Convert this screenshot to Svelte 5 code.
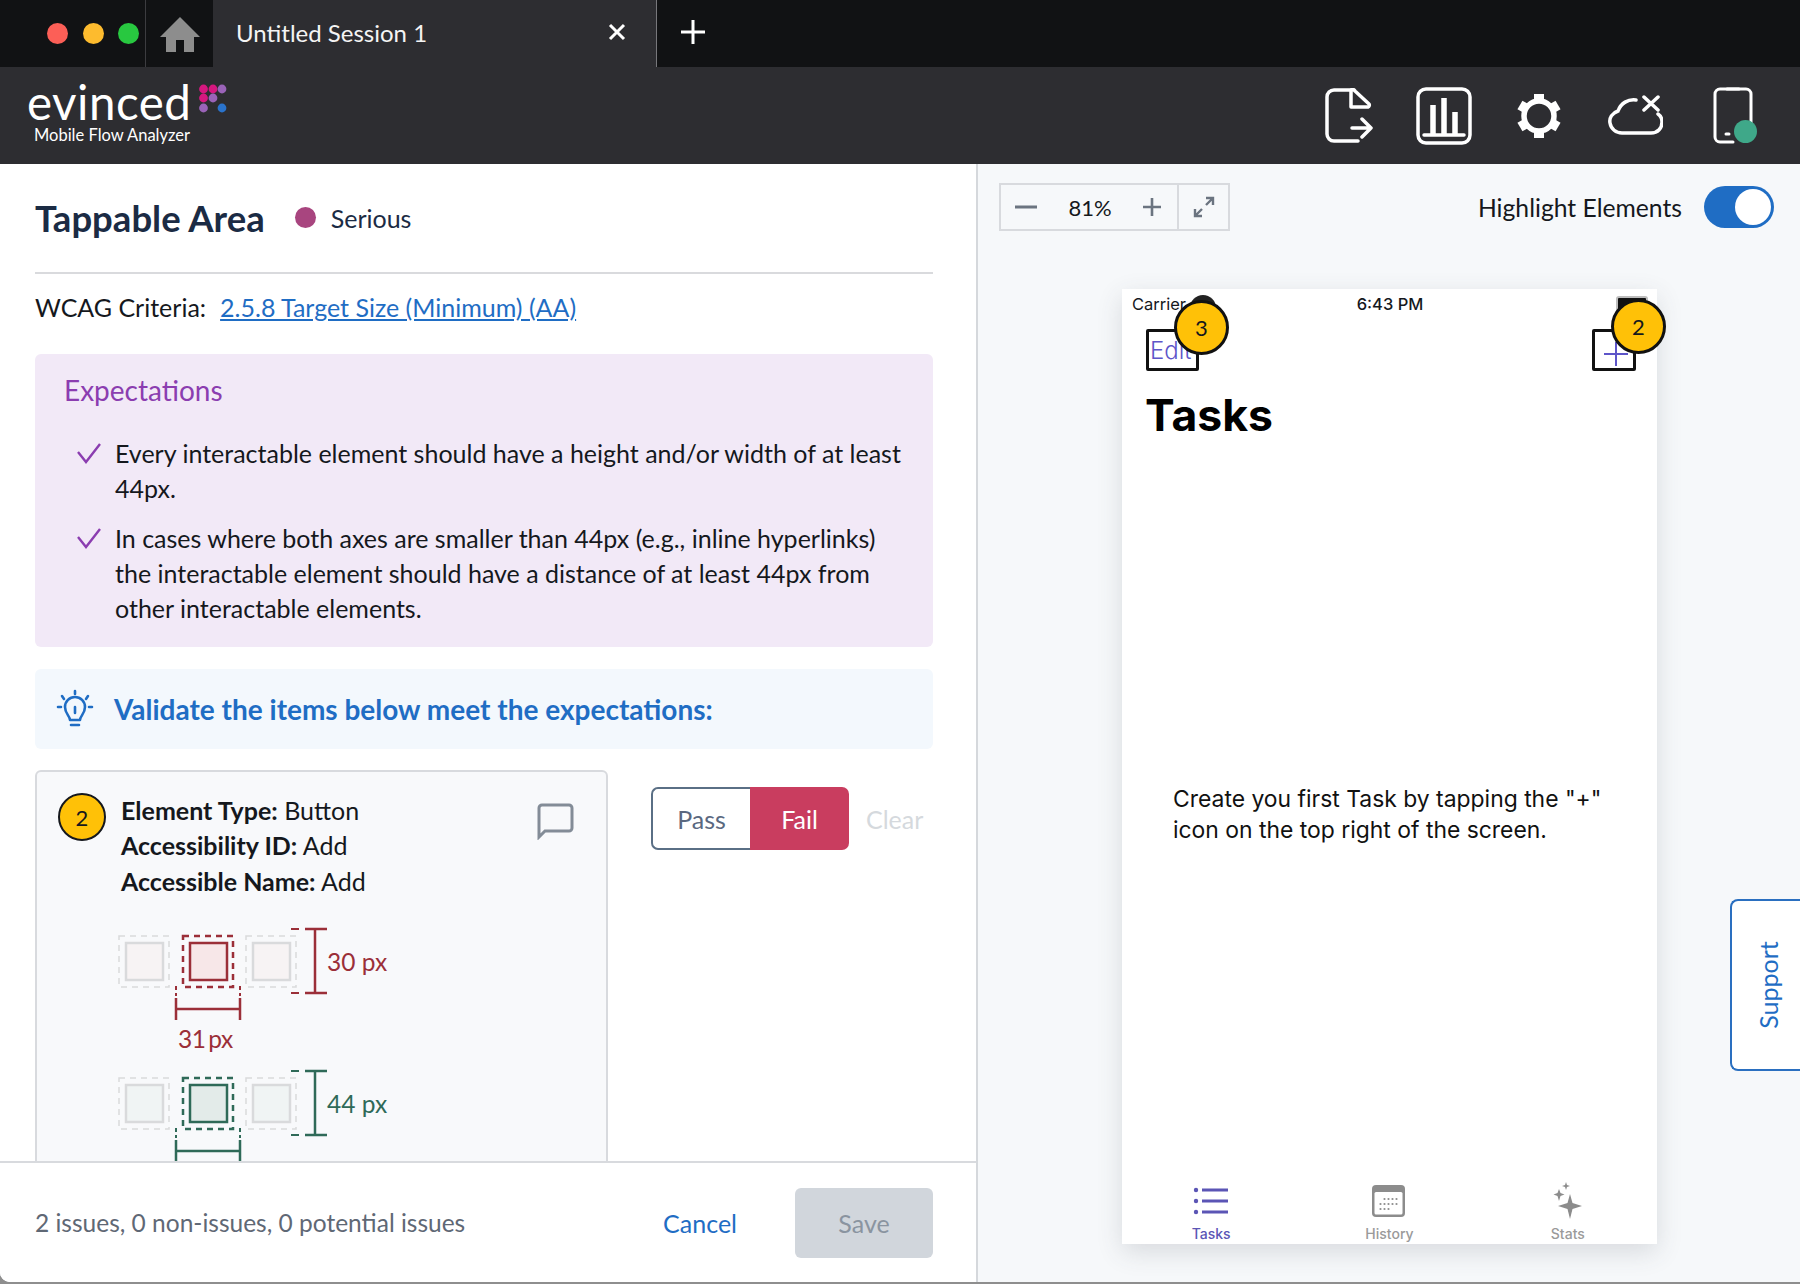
<script>
	const logoDots = [
		[204.5, 91, "#d6177f"], [214, 91, "#d6177f"], [223, 91, "#9a63b8"],
		[204.5, 100, "#d6177f"], [214, 100, "#9a63b8"],
		[204.5, 110, "#9a63b8"], [223, 110, "#2a73cc"]
	];
	const expectations = [
		"Every interactable element should have a height and/or width of at least 44px.",
		"In cases where both axes are smaller than 44px (e.g., inline hyperlinks) the interactable element should have a distance of at least 44px from other interactable elements."
	];
	const details = [
		["Element Type:", "Button"],
		["Accessibility ID:", "Add"],
		["Accessible Name:", "Add"]
	];
	const squares = [119, 183, 246];
	const gearTeeth = [0, 60, 120, 180, 240, 300];
	const calDots = [
		[12, 13], [16, 13], [20, 13], [24, 13],
		[8, 18], [12, 18], [16, 18], [20, 18], [24, 18],
		[8, 23], [12, 23], [16, 23]
	];
</script>

{#snippet measure(y, color, label, active)}
	{#each squares as x, i}
		<rect x={x} y={y} width="50" height="51" fill="none"
			stroke={i === 1 ? color : "#d9dadc"} stroke-width={i === 1 ? 2.5 : 1.5} stroke-dasharray="6 5" />
		<rect x={x + 7} y={y + 7} width="37" height="37" fill={active}
			fill-opacity={i === 1 ? 1 : 0.35}
			stroke={i === 1 ? color : "#d9dadc"} stroke-width="2.500" />
	{/each}
	<path d="M291 {y - 7}h8M291 {y + 57}h8" stroke={color} stroke-width="2" />
	<path d="M305 {y - 7}h22M305 {y + 57}h22M315 {y - 7}v64" stroke={color} stroke-width="2.500" fill="none" />
	<text x="327" y={y + 35} fill={color} class="px">{label}</text>
	<path d="M176 {y + 50}v10M240 {y + 50}v10" stroke={color} stroke-width="2" stroke-dasharray="4 3" />
	<path d="M176 {y + 62}v22M240 {y + 62}v22M176 {y + 73}h64" stroke={color} stroke-width="2.500" fill="none" />
{/snippet}

<div class="app">
	<div class="titlebar">
		<div class="lights">
			<span class="light red"></span>
			<span class="light yellow"></span>
			<span class="light green"></span>
		</div>
		<div class="home">
			<svg width="40" height="36" viewBox="0 0 40 36"><path d="M20 1L0 21h6v15h10V24h8v12h10V21h6z" fill="#8d8d8d" /></svg>
		</div>
		<div class="tab">
			<span>Untitled Session 1</span>
			<svg width="18" height="18" viewBox="0 0 18 18"><path d="M2 2l14 14M16 2L2 16" stroke="#fff" stroke-width="3" /></svg>
		</div>
		<div class="newtab">
			<svg width="26" height="26" viewBox="0 0 26 26"><path d="M13 1v24M1 13h24" stroke="#fff" stroke-width="3" /></svg>
		</div>
	</div>

	<header class="header">
		<div class="logo">
			<div class="logo-name">evinced</div>
			<div class="logo-sub">Mobile Flow Analyzer</div>
			<svg class="logo-dots" width="40" height="40" viewBox="200 86 30 30">
				{#each logoDots as [cx, cy, fill]}
					<circle {cx} {cy} r="4.4" {fill} />
				{/each}
			</svg>
		</div>
		<div class="tools">
			<svg class="file" width="48" height="56" viewBox="0 0 48 56" fill="none" stroke="#fff" stroke-width="3.5" stroke-linecap="round" stroke-linejoin="round">
				<path d="M33 53H9a7 7 0 0 1-7-7V9a7 7 0 0 1 7-7h17" />
				<path d="M26 2v17h17a2 2 0 0 0 1-3L30 3a3 3 0 0 0-4-1z" />
				<path d="M27 40h19M37 31l9 9-9 9" />
			</svg>
			<svg class="chart" width="56" height="58" viewBox="0 0 56 58" fill="none" stroke="#fff">
				<rect x="2" y="2" width="52" height="54" rx="8" stroke-width="3.5" />
				<path d="M8 48h40" stroke-width="3.5" stroke-linecap="round" />
				<path d="M17 18v30M28 11v37M39 25v23" stroke-width="5.5" />
			</svg>
			<svg class="gear" width="44" height="44" viewBox="0 0 44 44">
				<circle cx="22" cy="22" r="15" fill="none" stroke="#fff" stroke-width="5.500" />
				{#each gearTeeth as angle}
					<rect x="17" y="0" width="10" height="6" fill="#fff" transform="rotate({angle} 22 22)" />
				{/each}
			</svg>
			<svg class="cloud" width="56" height="41" viewBox="0 0 56 41" fill="none" stroke="#fff" stroke-width="3.5" stroke-linecap="round">
				<path d="M29 5c-8-1-15 3-18 11C5 18 2 23 3 28c1 6 6 10 12 10h29c7 0 11-5 11-11 0-3-1-6-4-8" />
				<path d="M37 2l14 13M51 2L37 15" />
			</svg>
			<div class="device">
				<svg width="40" height="57" viewBox="0 0 40 57" fill="none" stroke="#fff" stroke-width="3" stroke-linecap="round">
					<path d="M20 55H7a5 5 0 0 1-5-5V7a5 5 0 0 1 5-5h26a5 5 0 0 1 5 5v30" />
					<path d="M14 2h12M13 47h3" />
				</svg>
				<span class="status-dot"></span>
			</div>
		</div>
	</header>

	<main class="main">
		<section class="review">
			<div class="review-body">
				<div class="heading">
					<h1>Tappable Area</h1>
					<span class="severity-dot"></span>
					<span class="severity">Serious</span>
				</div>
				<div class="criteria">
					<span>WCAG Criteria:</span>
					<a href="#wcag">2.5.8 Target Size (Minimum) (AA)</a>
				</div>

				<div class="expect">
					<h2>Expectations</h2>
					{#each expectations as line}
						<div class="expect-item">
							<svg width="26" height="22" viewBox="0 0 26 22" fill="none"><path d="M2 10l8 10L24 2" stroke="#8b3db0" stroke-width="2.400" /></svg>
							<p>{line}</p>
						</div>
					{/each}
				</div>

				<div class="validate">
					<svg width="38" height="40" viewBox="0 0 38 40" fill="none" stroke="#1f6dc4" stroke-width="2.6" stroke-linecap="round" stroke-linejoin="round">
						<path d="M19 2v3M6 7l2 3M32 7l-2 3M2 18h3M33 18h3" />
						<path d="M14 31c0-4-5-6-5-13a10 10 0 0 1 20 0c0 7-5 9-5 13z" />
						<path d="M19 18v6M15 36h8" />
					</svg>
					<span>Validate the items below meet the expectations:</span>
				</div>

				<div class="item-row">
					<div class="card">
						<div class="card-top">
							<span class="badge small">2</span>
							<div class="details">
								{#each details as [key, value]}
									<div><span class="key">{key}</span> {value}</div>
								{/each}
							</div>
							<svg class="comment" width="37" height="38" viewBox="0 0 37 38" fill="none">
								<path d="M2 35V6a3 3 0 0 1 3-3h27a3 3 0 0 1 3 3v20a3 3 0 0 1-3 3H8z" stroke="#838c97" stroke-width="3" />
							</svg>
						</div>
						<svg class="diagram" width="300" height="250" viewBox="110 920 300 250">
							{@render measure(935, "#9b2f38", "30 px", "#f7e7e8")}
							<text x="178" y="1047" fill="#9b2f38" class="px narrow">31 px</text>
							{@render measure(1077, "#2f6a58", "44 px", "#e3ebe9")}
						</svg>
					</div>
					<div class="verdict">
						<div class="seg">
							<button class="pass">Pass</button>
							<button class="fail">Fail</button>
						</div>
						<span class="clear">Clear</span>
					</div>
				</div>
			</div>

			<footer class="footer">
				<span class="counts">2 issues, 0 non-issues, 0 potential issues</span>
				<a class="cancel" href="#cancel">Cancel</a>
				<button class="save">Save</button>
			</footer>
		</section>

		<section class="preview">
			<div class="toolbar">
				<div class="zoom">
					<div class="zoom-main">
						<svg width="24" height="4" viewBox="0 0 24 4"><path d="M1 2h22" stroke="#6b7480" stroke-width="3" /></svg>
						<span>81%</span>
						<svg width="20" height="20" viewBox="0 0 20 20"><path d="M10 1v18M1 10h18" stroke="#6b7480" stroke-width="2.6" /></svg>
					</div>
					<div class="zoom-fit">
						<svg width="24" height="24" viewBox="0 0 24 24" fill="none" stroke="#6b7480" stroke-width="2.4"><path d="M3 21l7-7M14 10l7-7M3 14v7h7M14 3h7v7" /></svg>
					</div>
				</div>
				<div class="highlight">
					<span>Highlight Elements</span>
					<div class="toggle"><span class="knob"></span></div>
				</div>
			</div>

			<div class="phone">
				<div class="statusbar">
					<span class="carrier">Carrier</span>
					<span class="time">6:43 PM</span>
					<span class="battery"></span>
				</div>
				<div class="navbar">
					<div class="target edit"><span>Edit</span></div>
					<div class="target add">
						<svg width="26" height="26" viewBox="0 0 26 26"><path d="M13 1v24M1 13h24" stroke="#5d55c9" stroke-width="2" /></svg>
					</div>
				</div>
				<h3 class="tasks-title">Tasks</h3>
				<p class="empty">Create you first Task by tapping the "+" icon on the top right of the screen.</p>
				<nav class="tabbar">
					<div class="tabitem active">
						<svg width="36" height="40" viewBox="0 0 36 40">
							<g fill="#5b55b5"><circle cx="3" cy="9" r="2.2" /><circle cx="3" cy="20" r="2.2" /><circle cx="3" cy="31" r="2.2" /></g>
							<path d="M9 9h26M9 20h26M9 31h26" stroke="#5b55b5" stroke-width="3" />
						</svg>
						<span>Tasks</span>
					</div>
					<div class="tabitem">
						<svg width="34" height="40" viewBox="0 0 34 34">
							<rect x="0" y="1" width="33" height="32" rx="4" fill="#8c8c8c" />
							<rect x="2.5" y="8" width="28" height="22.5" rx="1.5" fill="#fff" />
							{#each calDots as [cx, cy]}
								<circle cx={cx + 0.5} cy={cy + 2} r="1.1" fill="#8c8c8c" />
							{/each}
						</svg>
						<span>History</span>
					</div>
					<div class="tabitem">
						<svg width="34" height="40" viewBox="0 0 34 40" fill="#8c8c8c">
							<path d="M19 13l2.5 9 9.5 3-9.500 3L19 38l-2.500-10L7 25l9.500-3z" />
							<path d="M8 8l1.500 4 4 1.500-4 1.500L8 20l-1.500-5-4-1.500 4-1.500z" />
							<path d="M15 1l1 3 3 1-3 1-1 3-1-3-3-1 3-1z" />
						</svg>
						<span>Stats</span>
					</div>
				</nav>
				<span class="wifi"></span>
				<span class="badge large edit-badge">3</span>
				<span class="badge large add-badge">2</span>
			</div>

			<div class="support"><span>Support</span></div>
		</section>
	</main>
</div>

<style>
	:global(body) {
		margin: 0;
		background: #8e8e8e;
	}
	.app {
		width: 1800px;
		height: 1284px;
		display: flex;
		flex-direction: column;
		overflow: hidden;
		font-family: "Lato", "Liberation Sans", sans-serif;
		font-size: 25px;
		color: #15181d;
	}
	.titlebar {
		height: 67px;
		flex: none;
		display: flex;
		background: #111214;
	}
	.lights {
		width: 146px;
		display: flex;
		align-items: center;
		gap: 14.5px;
		padding-left: 47px;
		box-sizing: border-box;
		border-right: 1px solid #3c3c40;
	}
	.light {
		width: 21px;
		height: 21px;
		border-radius: 50%;
	}
	.red { background: #fc5f57; }
	.yellow { background: #fdbb2e; }
	.green { background: #28c840; }
	.home {
		width: 67px;
		display: flex;
		align-items: center;
		justify-content: center;
	}
	.tab {
		width: 444px;
		box-sizing: border-box;
		padding: 0 30px 3px 23px;
		display: flex;
		align-items: center;
		justify-content: space-between;
		background: #2d2d31;
		color: #f4f4f4;
		font-size: 24px;
		border-right: 1px solid #77777b;
	}
	.newtab {
		width: 72px;
		padding-bottom: 3px;
		display: flex;
		align-items: center;
		justify-content: center;
	}
	.header {
		height: 97px;
		flex: none;
		display: flex;
		justify-content: space-between;
		align-items: center;
		background: #2d2d31;
	}
	.logo {
		position: relative;
		margin: 0 0 8px 27px;
		color: #fff;
	}
	.logo-name {
		font-size: 47.500px;
		font-weight: 400;
		line-height: 46px;
		letter-spacing: 0.5px;
	}
	.logo-sub {
		font-size: 16.500px;
		line-height: 20px;
		margin-left: 7px;
	}
	.logo-dots {
		position: absolute;
		left: 172px;
		top: 5px;
		width: 30px;
		height: 30px;
	}
	.tools {
		width: 428px;
		height: 58px;
		margin-right: 47px;
		display: flex;
		align-items: center;
	}
	.chart { margin-left: 43px; }
	.gear { margin-left: 45px; }
	.cloud { margin-left: 46px; }
	.device {
		position: relative;
		width: 40px;
		height: 57px;
		margin-left: 50px;
	}
	.status-dot {
		position: absolute;
		left: 21px;
		top: 33px;
		width: 23px;
		height: 23px;
		border-radius: 50%;
		background: #3fa889;
	}
	.main {
		flex: 1;
		min-height: 0;
		display: grid;
		grid-template-columns: 976px 1fr;
		margin-bottom: 2px;
		border-bottom-left-radius: 10px;
		overflow: hidden;
		background: #f6f8fa;
	}
	.review {
		display: flex;
		flex-direction: column;
		min-height: 0;
		background: #fff;
	}
	.review-body {
		flex: 1;
		min-height: 0;
		overflow: hidden;
		padding: 0 43px 0 35px;
	}
	.heading {
		height: 110px;
		padding-bottom: 1px;
		box-sizing: border-box;
		display: flex;
		align-items: center;
		border-bottom: 2px solid #d9dadd;
	}
	h1 {
		margin: 0;
		font-size: 36.500px;
		font-weight: 700;
		color: #1b2b44;
	}
	.severity-dot {
		width: 21px;
		height: 21px;
		margin-left: 30px;
		border-radius: 50%;
		background: #a8457f;
	}
	.severity {
		margin-left: 15px;
		color: #1b2b44;
	}
	.criteria {
		height: 80px;
		box-sizing: border-box;
		padding-bottom: 14px;
		display: flex;
		align-items: center;
		gap: 14px;
	}
	.criteria a {
		color: #1f6dc4;
	}
	.expect {
		height: 293px;
		box-sizing: border-box;
		padding: 18px 30px 0 29px;
		border-radius: 6px;
		background: #f2e9f7;
	}
	h2 {
		margin: 0 0 28px;
		font-size: 28px;
		line-height: 36px;
		font-weight: 400;
		color: #8b3db0;
	}
	.expect-item {
		display: flex;
		gap: 13px;
		margin-top: 15px;
		padding-left: 12px;
	}
	.expect-item svg {
		flex: none;
		margin-top: 6px;
	}
	.expect-item p {
		margin: 0;
		line-height: 35px;
	}
	.validate {
		height: 80px;
		margin-top: 22px;
		padding-left: 21px;
		display: flex;
		align-items: center;
		gap: 20px;
		border-radius: 6px;
		background: #f3f8fd;
		color: #1f6dc4;
		font-size: 28px;
		font-weight: 700;
	}
	.item-row {
		display: flex;
		gap: 43px;
		margin-top: 21px;
	}
	.card {
		width: 573px;
		box-sizing: border-box;
		height: 420px;
		flex: none;
		padding: 21px 0 0 21px;
		border: 2px solid #d8dade;
		border-radius: 6px;
		background: #f8f9fb;
	}
	.card-top {
		display: flex;
		align-items: flex-start;
	}
	.badge {
		display: flex;
		align-items: center;
		justify-content: center;
		box-sizing: border-box;
		border-radius: 50%;
		background: #ffc107;
		color: #15181d;
	}
	.badge.small {
		flex: none;
		width: 48px;
		height: 48px;
		border: 2px solid #15181d;
		font-size: 22px;
	}
	.details {
		margin-left: 15px;
		line-height: 35.300px;
	}
	.key {
		font-weight: 700;
	}
	.comment {
		margin-left: auto;
		margin-right: 32px;
		margin-top: 9px;
	}
	.diagram {
		display: block;
		margin: 22.500px 0 0 52px;
	}
	.px {
		font-size: 24.500px;
	}
	.narrow {
		letter-spacing: -0.5px;
		word-spacing: -3px;
	}
	.verdict {
		display: flex;
		align-items: center;
		gap: 17px;
		height: 63px;
		margin-top: 17px;
	}
	.seg {
		display: flex;
		height: 63px;
	}
	.seg button {
		width: 99px;
		padding: 0;
		font: inherit;
	}
	.pass {
		background: #fff;
		color: #5a6880;
		border: 2px solid #5a6f85;
		border-right: 0;
		border-radius: 7px 0 0 7px;
	}
	.fail {
		background: #c93d5f;
		color: #fff;
		border: 0;
		border-radius: 0 7px 7px 0;
	}
	.clear {
		color: #d5d9dd;
	}
	.footer {
		height: 119px;
		flex: none;
		display: flex;
		align-items: center;
		padding: 0 43px 0 35px;
		border-top: 2px solid #d8dade;
		background: #fff;
	}
	.counts {
		color: #5f6875;
		font-size: 24.500px;
	}
	.cancel {
		margin-left: auto;
		margin-right: 58px;
		color: #1f6dc4;
		text-decoration: none;
	}
	.save {
		width: 138px;
		height: 70px;
		border: 0;
		border-radius: 6px;
		background: #d1d6dc;
		color: #8a94a0;
		font: inherit;
	}
	.preview {
		position: relative;
		box-sizing: border-box;
		border-left: 2px solid #d5d8dc;
		padding-top: 19px;
	}
	.toolbar {
		display: flex;
		justify-content: space-between;
		align-items: center;
		height: 48px;
		padding: 0 26px 0 21px;
	}
	.zoom {
		display: flex;
		height: 48px;
		box-sizing: border-box;
		border: 2px solid #d8dade;
	}
	.zoom-main {
		width: 178px;
		box-sizing: border-box;
		padding: 0 15px 0 13px;
		display: flex;
		align-items: center;
		justify-content: space-between;
		border-right: 2px solid #d8dade;
		font-size: 22px;
	}
	.zoom-fit {
		width: 49px;
		display: flex;
		align-items: center;
		justify-content: center;
	}
	.highlight {
		display: flex;
		align-items: center;
		gap: 22px;
		font-size: 24.700px;
	}
	.toggle {
		width: 70px;
		height: 42px;
		border-radius: 21px;
		background: #1f6dc4;
		display: flex;
		justify-content: flex-end;
		align-items: center;
		padding-right: 3px;
		box-sizing: border-box;
	}
	.knob {
		width: 36px;
		height: 36px;
		border-radius: 50%;
		background: #fff;
	}
	.phone {
		position: relative;
		width: 535px;
		height: 955px;
		margin: 58px 0 0 144px;
		display: flex;
		flex-direction: column;
		background: #fff;
		box-shadow: 0 8px 24px rgba(60, 70, 80, 0.16);
		font-family: "Inter", "Liberation Sans", sans-serif;
	}
	.statusbar {
		height: 30px;
		padding: 0 9px 0 10px;
		display: grid;
		grid-template-columns: 1fr auto 1fr;
		align-items: center;
		font-size: 16.500px;
	}
	.time {
		font-weight: 500;
	}
	.battery {
		justify-self: end;
		width: 32px;
		height: 16px;
		box-sizing: border-box;
		border: 2px solid #bdbdbd;
		border-radius: 3px;
		background: #111;
	}
	.wifi {
		position: absolute;
		left: 68px;
		top: 6px;
		width: 26px;
		height: 14px;
		border-radius: 13px 13px 0 0;
		background: #222;
	}
	.navbar {
		margin-top: 10px;
		padding: 0 21px 0 24px;
		display: flex;
		justify-content: space-between;
	}
	.target {
		height: 42px;
		box-sizing: border-box;
		border: 3.500px solid #111;
		border-radius: 2px;
		overflow: hidden;
		display: flex;
		align-items: center;
	}
	.edit {
		width: 53px;
		color: #5d55c9;
		font-size: 24px;
		font-weight: 300;
	}
	.edit span {
		margin-left: 1px;
	}
	.add {
		width: 44px;
		justify-content: center;
	}
	.add svg {
		margin: 8px -4px 0 0;
	}
	.tasks-title {
		margin: 20px 0 0 23px;
		font-size: 44.500px;
		line-height: 48px;
		font-weight: 700;
		color: #000;
	}
	.empty {
		margin: 345px 40px 0 51px;
		font-size: 22.900px;
		line-height: 31px;
		color: #111;
	}
	.tabbar {
		margin-top: auto;
		display: grid;
		grid-template-columns: repeat(3, 1fr);
		height: 63px;
	}
	.tabitem {
		display: flex;
		flex-direction: column;
		align-items: center;
		color: #9a9a9a;
		font-size: 14px;
		font-weight: 500;
		line-height: 20px;
	}
	.tabitem span {
		margin-top: 3px;
	}
	.tabitem.active {
		color: #5b55b5;
	}
	.badge.large {
		position: absolute;
		width: 55px;
		height: 55px;
		border: 3.500px solid #111;
		font-size: 22px;
		font-family: "Lato", sans-serif;
	}
	.edit-badge {
		left: 52px;
		top: 11px;
	}
	.add-badge {
		left: 489px;
		top: 10px;
	}
	.support {
		position: absolute;
		right: 0;
		top: 735px;
		width: 70px;
		height: 172px;
		box-sizing: border-box;
		padding-left: 3px;
		border: 2px solid #2a6fc0;
		border-right: 0;
		border-radius: 8px 0 0 8px;
		background: #fff;
		display: flex;
		align-items: center;
		justify-content: center;
		color: #1f6dc4;
	}
	.support span {
		transform: rotate(-90deg);
	}
</style>
